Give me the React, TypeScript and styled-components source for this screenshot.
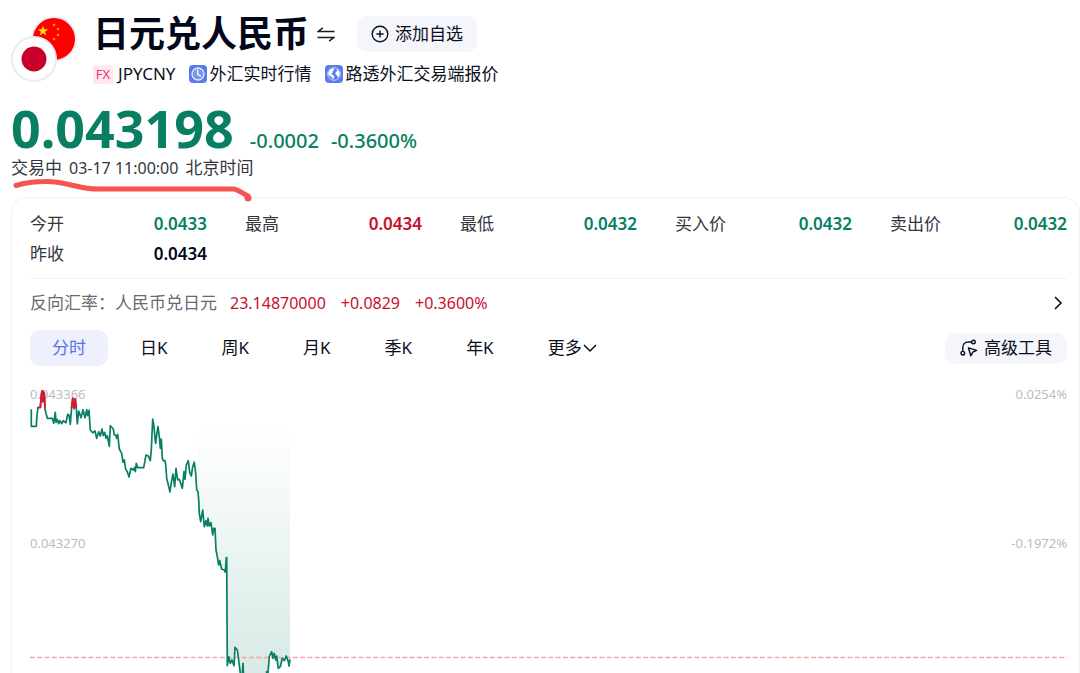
import React from "react";
import styled, { createGlobalStyle } from "styled-components";

const UP = "#c8102e";
const DOWN = "#087f63";
const INK = "#0b0f1c";

const GlobalStyle = createGlobalStyle`
  *, *::before, *::after { box-sizing: border-box; }
  body {
    margin: 0;
    background: #fff;
    color: ${INK};
    font-family: "Noto Sans", "Noto Sans CJK SC", sans-serif;
    font-size: 17px;
    line-height: 24px;
  }
  button { font: inherit; color: inherit; border: 0; background: none; padding: 0; cursor: pointer; }
  h1, p, dl, dd, dt { margin: 0; font-weight: inherit; }
  svg { display: block; flex: none; }
`;

const Page = styled.main`
  padding: 10px 0 0 11px;
  position: relative;
`;

const Header = styled.header`
  display: flex;
  gap: 16px;
`;

const Flags = styled.div`
  padding-top: 5px;
`;

const Heading = styled.div`
  display: flex;
  flex-direction: column;
  gap: 4px;
`;

const TitleRow = styled.div`
  display: flex;
  align-items: center;
  height: 48px;
`;

const Title = styled.h1`
  font-size: 36px;
  line-height: 48px;
  font-weight: 700;
  color: #03071a;
  white-space: nowrap;
`;

const SwapButton = styled.button`
  margin: 0 22px 0 8px;
`;

const SoftButton = styled.button<{ $height: number; $pad: number }>`
  display: flex;
  align-items: center;
  gap: 6px;
  height: ${(p) => p.$height}px;
  padding: 0 ${(p) => p.$pad}px;
  border-radius: 10px;
  background: #f4f6fb;
  white-space: nowrap;
`;

const TagRow = styled.div`
  display: flex;
  align-items: center;
  gap: 13px;
  white-space: nowrap;
`;

const Tag = styled.span<{ $gap: number }>`
  display: flex;
  align-items: center;
  gap: ${(p) => p.$gap}px;
`;

const Badge = styled.span`
  width: 20px;
  height: 19px;
  border-radius: 3px;
  background: #ffe6ef;
  color: #e2397f;
  font-size: 13px;
  line-height: 19px;
  text-align: center;
`;

const PriceRow = styled.div`
  display: flex;
  align-items: baseline;
  gap: 12px;
  margin-top: 14px;
  color: ${DOWN};
`;

const Price = styled.strong`
  font-size: 52px;
  line-height: 56px;
  font-weight: 700;
  margin-right: 4px;
`;

const Change = styled.span`
  font-size: 20px;
  line-height: 24px;
  font-weight: 500;
`;

const Session = styled.p`
  display: flex;
  gap: 7px;
  color: #33363f;
`;

const Num = styled.span`
  font-size: 16px;
`;

const Underline = styled.svg`
  position: absolute;
  left: 10px;
  top: 176px;
  pointer-events: none;
`;

const Card = styled.section`
  margin-top: 17px;
  padding: 11px 12px 0 18px;
  border: 1px solid #f1f2f4;
  border-bottom: 0;
  border-radius: 16px 16px 0 0;
`;

const Stats = styled.dl`
  display: grid;
  grid-template-columns: repeat(5, 1fr);
  column-gap: 38px;
  padding-bottom: 9px;
  border-bottom: 1px solid #f0f1f3;
`;

const Stat = styled.div`
  display: flex;
  justify-content: space-between;
  line-height: 30px;
  color: #33363f;
`;

const StatValue = styled.dd<{ $color: string }>`
  color: ${(p) => p.$color};
  font-weight: 600;
`;

const InverseRow = styled.a`
  display: flex;
  align-items: center;
  height: 48px;
  color: #666a73;
  text-decoration: none;
`;

const InverseFigures = styled.span`
  display: flex;
  flex: 1;
  gap: 15px;
  margin-left: 13px;
  color: ${UP};
`;

const Toolbar = styled.div`
  display: flex;
  align-items: center;
  justify-content: space-between;
  margin-top: 3px;
`;

const Tabs = styled.nav`
  display: flex;
  gap: 10px;
`;

const Tab = styled.button<{ $active?: boolean }>`
  display: flex;
  align-items: center;
  height: 36px;
  padding: 0 22px;
  border-radius: 10px;
  white-space: nowrap;
  background: ${(p) => (p.$active ? "#eef0fe" : "transparent")};
  color: ${(p) => (p.$active ? "#5673e8" : INK)};
`;

const Chart = styled.div`
  position: relative;
  margin-top: 9px;
  height: 298px;
  overflow: hidden;
`;

const Scale = styled.div`
  position: absolute;
  inset: 0;
  padding-top: 9px;
  display: flex;
  flex-direction: column;
  gap: 129px;
  color: #bcbcbc;
  font-size: 13px;
  line-height: 20px;
`;

const ScaleRow = styled.div`
  display: flex;
  justify-content: space-between;
`;

const Plot = styled.svg`
  position: relative;
`;

type Segment = { dx: number; dy: number; points: number[][] };

const segments: Segment[] = [
  {
    dx: -10,
    dy: 0,
    points: [
      [34, 103], [34, 154], [49, 154], [51, 120], [54, 98], [61, 98], [64, 62], [66, 48], [68, 80], [70, 50], [73, 55],
      [75, 103], [82, 130], [97, 130], [101, 145], [106, 112], [108, 142], [112, 133], [116, 146], [120, 137],
      [125, 146], [130, 137], [138, 143], [143, 118], [147, 120], [151, 148], [155, 95], [158, 70], [162, 102],
      [166, 72], [169, 100], [172, 147], [176, 108], [183, 128], [189, 104], [195, 128], [200, 104], [203, 122],
      [207, 106], [211, 165], [218, 173], [225, 168], [230, 190], [236, 170], [241, 183], [246, 162], [250, 182],
      [254, 172], [258, 190], [262, 182], [268, 214], [271, 152], [280, 162], [283, 180], [287, 180], [290, 190],
      [293, 178], [298, 222], [305, 235], [309, 262], [313, 255], [317, 283], [322, 290], [327, 306], [333, 280],
      [340, 285], [344, 277], [346, 290], [349, 265], [353, 278], [371, 278], [378, 240], [385, 243], [391, 257],
      [394, 225], [398, 132], [402, 155], [405, 190], [407, 205], [411, 172], [414, 155], [418, 185], [421, 220],
      [424, 192], [427, 250],
    ],
  },
  {
    dx: 110,
    dy: 25,
    points: [
      [70, 182], [75, 182], [77, 195], [80, 235], [90, 276], [94, 248], [99, 222], [104, 260], [108, 205], [113, 240],
      [118, 238], [122, 250], [127, 265], [132, 215], [135, 238], [139, 195], [145, 182], [149, 218], [154, 228],
      [158, 200], [163, 186], [167, 220], [170, 270], [174, 275],
    ],
  },
  {
    dx: 140,
    dy: 125,
    points: [
      [86, 0], [88, 40], [92, 65], [98, 30], [103, 80], [108, 62], [112, 78], [114, 55], [118, 78], [123, 68],
      [128, 105], [131, 85], [135, 85], [138, 150], [142, 170], [146, 195], [149, 182], [155, 208], [163, 210],
      [166, 216], [169, 173], [170, 173], [172, 497], [176, 470], [181, 490], [186, 480], [192, 497], [195, 442],
      [202, 450], [206, 480], [211, 520], [216, 540], [219, 490], [221, 540], [285, 560], [290, 515], [294, 518],
      [298, 470], [305, 455], [309, 475], [313, 460], [317, 480], [320, 468], [325, 505], [331, 500], [337, 475],
      [343, 482], [349, 468], [355, 485], [357, 498], [360, 478],
    ],
  },
];

const linePoints = segments
  .flatMap((s) => s.points.map(([x, y]) => `${(x / 3 + s.dx).toFixed(1)},${(y / 3 + s.dy).toFixed(1)}`))
  .join(" ");

const stats = [
  { label: "今开", value: "0.0433", color: DOWN },
  { label: "最高", value: "0.0434", color: UP },
  { label: "最低", value: "0.0432", color: DOWN },
  { label: "买入价", value: "0.0432", color: DOWN },
  { label: "卖出价", value: "0.0432", color: DOWN },
  { label: "昨收", value: "0.0434", color: "#03071a" },
];

const starPath = (cx: number, cy: number, r: number) =>
  Array.from({ length: 10 }, (_, i) => {
    const a = (Math.PI / 5) * i - Math.PI / 2;
    const q = i % 2 ? r * 0.4 : r;
    return `${(cx + q * Math.cos(a)).toFixed(1)},${(cy + q * Math.sin(a)).toFixed(1)}`;
  }).join(" ");

const FlagPair = () => (
  <svg width="66" height="68" viewBox="0 0 66 68" aria-hidden="true">
    <circle cx="43" cy="24" r="22" fill="#fe0000" stroke="#ececef" strokeWidth="2" />
    <polygon points={starPath(32, 16, 5.5)} fill="#ffde00" />
    <polygon points={starPath(43, 10, 2)} fill="#ffb400" />
    <polygon points={starPath(47, 14, 2)} fill="#ffb400" />
    <polygon points={starPath(47, 20, 2)} fill="#ffb400" />
    <polygon points={starPath(43, 24, 2)} fill="#ffb400" />
    <circle cx="23" cy="44" r="22" fill="#fff" stroke="#ececef" strokeWidth="2" />
    <circle cx="23" cy="44" r="12.5" fill="#c8002a" />
  </svg>
);

const ClockIcon = () => (
  <svg width="18" height="18" viewBox="0 0 18 18" aria-hidden="true">
    <rect width="18" height="18" rx="4" fill="#5b7bea" />
    <circle cx="9" cy="9" r="6" fill="#7b96f2" stroke="#dfe6ff" strokeWidth="1.3" />
    <path d="M8.6 5.2v4l3 1.8" fill="none" stroke="#fff" strokeWidth="1.3" strokeLinecap="round" />
  </svg>
);

const GlobeIcon = () => (
  <svg width="18" height="18" viewBox="0 0 18 18" aria-hidden="true">
    <rect width="18" height="18" rx="4" fill="#5b7bea" />
    <circle cx="9" cy="9" r="6.3" fill="#5b7bea" stroke="#cdd8ff" strokeWidth="1" />
    <path d="M3 8.4 5 4.6l3.4-1.4.8 1.6-1.6 1.6.2 1.4-1.8 1 2.4 1.4 1 1.6-1.4 2.6-1.6-2.6-2.6-1.6z" fill="#fff" />
    <path d="m11.2 4 2.4 1.4 1.2 3-.8 3-1.6.8-.6-2.2-1.6-1.2.8-2 1.4-.8z" fill="#fff" />
  </svg>
);

const SwapIcon = () => (
  <svg width="18" height="18" viewBox="0 0 18 18" fill="none" stroke="#1a1d28" strokeWidth="1.5" aria-hidden="true">
    <path d="M17.5 6.5H1.2L5.8 2.8M.5 12.5h16.3l-4.6 3.7" />
  </svg>
);

const PlusCircleIcon = () => (
  <svg width="18" height="18" viewBox="0 0 18 18" fill="none" stroke={INK} strokeWidth="1.4" aria-hidden="true">
    <circle cx="9" cy="9" r="7.8" />
    <path d="M9 5.4v7.2M5.4 9h7.2" />
  </svg>
);

const PathToolIcon = () => (
  <svg width="18" height="18" viewBox="0 0 18 18" fill="none" stroke={INK} strokeWidth="1.4" aria-hidden="true">
    <circle cx="13.4" cy="3" r="1.8" />
    <circle cx="2.8" cy="14.2" r="1.8" />
    <path d="M11.4 3H8.4C4.6 3 2.8 5.4 2.8 8.8v3.4" />
    <path d="m8.4 8.8 8.2 2.6-3.8 1.8-2 3.6z" strokeLinejoin="round" />
  </svg>
);

export default function App() {
  return (
    <>
      <GlobalStyle />
      <Page>
        <Header>
          <Flags>
            <FlagPair />
          </Flags>
          <Heading>
            <TitleRow>
              <Title>日元兑人民币</Title>
              <SwapButton aria-label="互换货币">
                <SwapIcon />
              </SwapButton>
              <SoftButton $height={36} $pad={14}>
                <PlusCircleIcon />
                添加自选
              </SoftButton>
            </TitleRow>
            <TagRow>
              <Tag $gap={5}>
                <Badge>FX</Badge>
                JPYCNY
              </Tag>
              <Tag $gap={3}>
                <ClockIcon />
                外汇实时行情
              </Tag>
              <Tag $gap={3}>
                <GlobeIcon />
                路透外汇交易端报价
              </Tag>
            </TagRow>
          </Heading>
        </Header>

        <PriceRow>
          <Price>0.043198</Price>
          <Change>-0.0002</Change>
          <Change>-0.3600%</Change>
        </PriceRow>
        <Session>
          <span>交易中</span>
          <Num>03-17 11:00:00</Num>
          <span>北京时间</span>
        </Session>

        <Card>
          <Stats>
            {stats.map((s) => (
              <Stat key={s.label}>
                <dt>{s.label}</dt>
                <StatValue $color={s.color}>{s.value}</StatValue>
              </Stat>
            ))}
          </Stats>

          <InverseRow href="#inverse">
            <span>反向汇率：人民币兑日元</span>
            <InverseFigures>
              <Num>23.14870000</Num>
              <Num>+0.0829</Num>
              <Num>+0.3600%</Num>
            </InverseFigures>
            <svg width="18" height="18" viewBox="0 0 18 18" fill="none" stroke={INK} strokeWidth="1.6" aria-hidden="true">
              <path d="m6 3 6 6-6 6" />
            </svg>
          </InverseRow>

          <Toolbar>
            <Tabs>
              <Tab $active>分时</Tab>
              <Tab>日K</Tab>
              <Tab>周K</Tab>
              <Tab>月K</Tab>
              <Tab>季K</Tab>
              <Tab>年K</Tab>
              <Tab>
                更多
                <svg width="15" height="12" viewBox="0 0 15 12" fill="none" stroke={INK} strokeWidth="1.5" aria-hidden="true">
                  <path d="m2 3 6 6 6-6" />
                </svg>
              </Tab>
            </Tabs>
            <SoftButton $height={31} $pad={15}>
              <PathToolIcon />
              高级工具
            </SoftButton>
          </Toolbar>

          <Chart>
            <Scale>
              <ScaleRow>
                <span>0.043366</span>
                <span>0.0254%</span>
              </ScaleRow>
              <ScaleRow>
                <span>0.043270</span>
                <span>-0.1972%</span>
              </ScaleRow>
            </Scale>
            <Plot width="100%" height="298" role="img" aria-label="分时走势">
              <defs>
                <linearGradient id="area" gradientUnits="userSpaceOnUse" x1="0" y1="50" x2="0" y2="298">
                  <stop offset="0" stopColor={DOWN} stopOpacity="0" />
                  <stop offset="1" stopColor={DOWN} stopOpacity="0.16" />
                </linearGradient>
                <clipPath id="above">
                  <rect width="100%" height="33" />
                </clipPath>
                <clipPath id="shade">
                  <rect x="168" y="34" width="92" height="264" />
                </clipPath>
              </defs>
              <polygon points={`${linePoints} 260,34`} fill="url(#area)" clipPath="url(#shade)" />
              <line x1="0" x2="100%" y1="282.5" y2="282.5" stroke="#f4a3a3" strokeWidth="1.5" strokeDasharray="5 2.3" />
              <polyline points={linePoints} fill="none" stroke={DOWN} strokeWidth="1.7" strokeLinejoin="round" />
              <polyline
                points={linePoints}
                fill="none"
                stroke="#e0142f"
                strokeWidth="1.8"
                strokeLinejoin="round"
                clipPath="url(#above)"
              />
            </Plot>
          </Chart>
        </Card>

        <Underline width="244" height="28" viewBox="0 0 244 28" aria-hidden="true">
          <path
            d="M6 9.5C14 7 24 5.5 35 5.5C48 5 56 8 66 10C74 12.5 80 13 90 13H224C229 14 232 17 238 20"
            fill="none"
            stroke="#f75353"
            strokeWidth="5"
            strokeLinecap="round"
            strokeLinejoin="round"
          />
          <circle cx="238" cy="22" r="3.5" fill="#f75353" />
        </Underline>
      </Page>
    </>
  );
}
